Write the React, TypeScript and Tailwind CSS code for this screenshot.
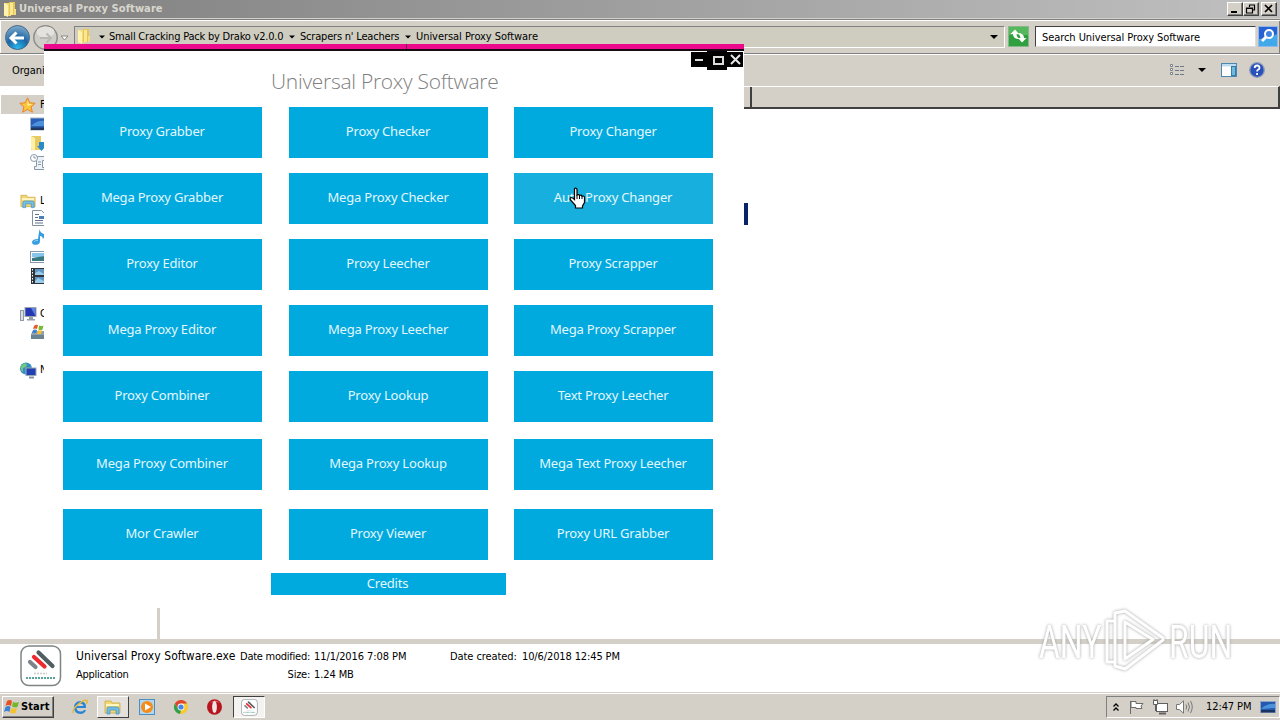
import type { ReactNode } from 'react';

const rows: { h: string; items: string[] }[] = [
  { h: 'mt-[12px]', items: ['Proxy Grabber', 'Proxy Checker', 'Proxy Changer'] },
  { h: 'mt-[15px]', items: ['Mega Proxy Grabber', 'Mega Proxy Checker', 'Auto Proxy Changer'] },
  { h: 'mt-[15px]', items: ['Proxy Editor', 'Proxy Leecher', 'Proxy Scrapper'] },
  { h: 'mt-[15px]', items: ['Mega Proxy Editor', 'Mega Proxy Leecher', 'Mega Proxy Scrapper'] },
  { h: 'mt-[15px]', items: ['Proxy Combiner', 'Proxy Lookup', 'Text Proxy Leecher'] },
  { h: 'mt-[17px]', items: ['Mega Proxy Combiner', 'Mega Proxy Lookup', 'Mega Text Proxy Leecher'] },
  { h: 'mt-[19px]', items: ['Mor Crawler', 'Proxy Viewer', 'Proxy URL Grabber'] },
];

function FolderIcon({ className = '' }: { className?: string }) {
  return (
    <svg className={className} width="16" height="16" viewBox="0 0 16 16">
      <path d="M2 2h6l1 1v12H2z" fill="#f3dc7b" />
      <path d="M2 2l4 2v12l-4-2z" fill="#fff2ae" />
      <path d="M7 1h6v13H7z" fill="#e6c455" />
      <path d="M8 2h3v12H8z" fill="#f8e894" />
      <path d="M12 8h2v6h-2z" fill="#f5dd80" />
    </svg>
  );
}

function Caret({ className = '' }: { className?: string }) {
  return (
    <svg className={className} width="8" height="4" viewBox="0 0 8 4">
      <path d="M0 0h8L4 4z" fill="#000" />
    </svg>
  );
}

function LibraryIcon({ className = '' }: { className?: string }) {
  return (
    <svg className={className} width="18" height="16" viewBox="0 0 18 16">
      <path d="M1 2h6l1 2h8v10H1z" fill="#f1d873" stroke="#cfa942" strokeWidth=".8" />
      <path d="M2 5h13v2H2z" fill="#fff6c4" />
      <path d="M3 15V10q0-2 2-2h8q2 0 2 2v5h-3v-4H6v4z" fill="#74bfe8" stroke="#3c8dc4" strokeWidth=".7" />
    </svg>
  );
}

function AppLogo({ size }: { size: number }) {
  return (
    <svg width={size} height={size} viewBox="0 0 42 42">
      <rect x="1" y="1" width="39.500" height="39.500" rx="8" fill="#fff" stroke="#7d8585" strokeWidth="1.500" />
      <g strokeWidth="4.200" strokeLinecap="round">
        <path d="M18.500 7.500l14 13.500" stroke="#4f5f61" />
        <path d="M14 12l10.500 9.500" stroke="#ee2a2e" />
        <path d="M10 17l5.500 5" stroke="#7d8388" />
      </g>
      <path d="M14 28.500h13" stroke="#ccc" strokeWidth="1.500" strokeDasharray="2 1" />
      <path d="M6 33h29" stroke="#58a49a" strokeWidth="2" strokeDasharray="2 1" />
    </svg>
  );
}

function Win({ children }: { children: ReactNode }) {
  return (
    <span className="flex h-[14px] w-4 items-center justify-center border border-t-white border-l-white border-r-[#404040] border-b-[#404040] bg-[#d4d0c8] shadow-[inset_-1px_-1px_0_#808080]">
      <svg width="14" height="12" viewBox="0 0 14 12" fill="none" stroke="#000">{children}</svg>
    </span>
  );
}

function TitleBar() {
  return (
    <header className="flex h-[18px] items-center bg-linear-to-r from-[#808080] to-[#c0c0c0] pr-[3px] pl-[2px]">
      <FolderIcon />
      <span className="ml-px pt-px text-[11px] font-bold tracking-[0.090px] whitespace-nowrap text-[#d9d6ce]">Universal Proxy Software</span>
      <div className="ml-auto flex">
        <Win><path d="M3 9h6" strokeWidth="2" /></Win>
        <Win><path d="M5 2h6M5.500 2v2M10.500 2v5H9M2.500 5h6v5h-6zM2 5.500h7" strokeWidth="1.200" /></Win>
        <span className="w-[2px]" />
        <Win><path d="M3 2l7 7M10 2L3 9" strokeWidth="1.700" /></Win>
      </div>
    </header>
  );
}

function AddressBar() {
  return (
    <div className="flex h-[35px] items-start border-t border-b border-t-[#808080] border-b-[#808080] bg-[#d4d0c8] pt-[6px] pl-[4px] text-[11px] shadow-[inset_1px_1px_0_#fff,inset_-1px_0_0_#808080]">
      <svg className="-mt-[2px]" width="66" height="28" viewBox="0 0 66 28">
        <defs>
          <radialGradient id="nav" cx=".5" cy=".95" r=".9">
            <stop offset="0" stopColor="#27baf0" />
            <stop offset=".5" stopColor="#1c67a8" />
            <stop offset="1" stopColor="#79a5c6" />
          </radialGradient>
        </defs>
        <circle cx="13.500" cy="13.500" r="12" fill="url(#nav)" stroke="#466b89" />
        <path d="M7 14h13M12.500 8.500L7 14l5.500 5.500" fill="none" stroke="#fff" strokeWidth="3" />
        <circle cx="41.500" cy="13.500" r="11.700" fill="#cfcdc8" stroke="#8c8c88" strokeWidth="1.500" />
        <ellipse cx="41.500" cy="8" rx="9" ry="5.500" fill="#e4e2de" />
        <path d="M36 14h11M42.500 9.500L47 14l-4.500 4.500" fill="none" stroke="#bab8b3" strokeWidth="2" />
        <path d="M57 12h7l-3.500 4z" fill="#fff" stroke="#858585" />
      </svg>
      <div className="ml-[4px] flex h-[22px] w-[931px] items-center border border-t-[#808080] border-r-white border-b-white border-l-[#808080] bg-[#cfcdc0] whitespace-nowrap">
        <FolderIcon className="-mt-[2px] ml-[1px] shrink-0" />
        <Caret className="mr-[4px] ml-[7px] w-[6px] shrink-0" />
        <span className="w-[180px] tracking-[-0.210px]">Small Cracking Pack by Drako v2.0.0</span>
        <Caret className="mr-[5px] w-[6px] shrink-0" />
        <span className="w-[105px] tracking-[-0.200px]">Scrapers n&apos; Leachers</span>
        <Caret className="mr-[5px] w-[6px] shrink-0" />
        <span className="tracking-[-0.050px]">Universal Proxy Software</span>
        <Caret className="mr-[6px] ml-auto shrink-0" />
      </div>
      <svg className="ml-[3px]" width="21" height="21" viewBox="0 0 21 21">
        <rect x=".5" y=".5" width="20" height="20" fill="#2f9f3f" stroke="#87b889" />
        <path d="M1 1h19v8H1z" fill="#56b85c" />
        <path d="M2.500 8L7 3.500 11 8H8.500q0 3 3 5Q5 13 5 8zM18.500 12L14 16.500 10 12h2.500q0-3-3-5Q16 7 16 12z" fill="#fff" />
      </svg>
      <div className="ml-[6px] flex h-[21px] w-[221px] items-center border border-t-[#404040] border-r-[#ddd] border-b-[#ddd] border-l-[#404040] bg-white pt-[3px] pl-[6px] tracking-[-0.070px] whitespace-nowrap">
        Search Universal Proxy Software
      </div>
      <svg className="ml-[2px]" width="20" height="21" viewBox="0 0 20 21">
        <rect x=".5" y=".5" width="19" height="20" fill="#2861d2" stroke="#92b7ea" />
        <path d="M1 13q10 0 18-5v12H1z" fill="#41a8e9" />
        <circle cx="11" cy="8" r="4" fill="#3f83e1" stroke="#fff" strokeWidth="2" />
        <path d="M8 11l-4 4" stroke="#fff" strokeWidth="3" />
      </svg>
    </div>
  );
}

function CommandBar() {
  return (
    <div className="flex h-[32px] items-center border-t border-t-white bg-[#d4d0c8] pr-[15px] pl-[12px] text-[11px]">
      <span className="pt-px tracking-[-0.050px]">Organize</span>
      <svg className="-mt-[2px] ml-auto" width="16" height="12" viewBox="0 0 16 12" fill="none">
        <path d="M1.500 .5h2v2h-2zM1.500 4.500h2v2h-2zM1.500 8.500h2v2h-2z" fill="#fff" stroke="#7a8088" />
        <path d="M6 2.500h4M6 6.500h4M6 10.500h4M11 2.500h4M11 6.500h4M11 10.500h4" stroke="#6e7a88" />
      </svg>
      <Caret className="-mt-[2px] ml-[13px]" />
      <svg className="-mt-[2px] ml-[15px]" width="16" height="14" viewBox="0 0 16 14">
        <rect x=".5" y=".5" width="15" height="13" fill="#fff" stroke="#4c87ad" />
        <path d="M1 1h14v2.500H1z" fill="#bddcf0" />
        <rect x="10.500" y="3.500" width="4" height="9" fill="#71b9e1" stroke="#347ca8" />
      </svg>
      <svg className="-mt-[2px] ml-[12px]" width="16" height="16" viewBox="0 0 16 16">
        <circle cx="8" cy="8" r="7.300" fill="#2a50ba" stroke="#8d9dbb" strokeWidth="1.300" />
        <path d="M5.700 6q0-2.500 2.400-2.500T10.500 6Q10.500 7 9 7.800q-.9.500-.9 1.700M8.100 11v2" fill="none" stroke="#fff" strokeWidth="1.800" />
      </svg>
    </div>
  );
}

function NavTree() {
  return (
    <nav className="flex w-[157px] flex-col pt-[9px] text-[11px]">
      <div className="ml-px flex h-[19px] items-center bg-[#d4d0c8] pl-[18px]">
        <svg width="17" height="16" viewBox="0 0 17 16">
          <path d="M8.500 .8l2.300 5 5.400.5-4.100 3.600 1.300 5.300-4.900-2.800-4.900 2.800L4.900 9.900.8 6.300l5.400-.5z" fill="#fbc63c" stroke="#e9822b" />
          <path d="M8.500 3.500l1.500 3.500 3.500.3-5 1.700z" fill="#ffee99" />
        </svg>
        <span className="ml-[4px] pt-[2px]">Favorites</span>
      </div>
      <div className="flex flex-col gap-[3px] pt-[2px] pl-[30px]">
        <svg width="16" height="16" viewBox="0 0 16 16">
          <rect x=".5" y="2" width="15" height="12" fill="#2a5fb9" stroke="#a3b4c8" />
          <path d="M1 10Q7 4 15 5v5z" fill="#4d90db" />
          <path d="M1 11.500h14V14H1z" fill="#20385d" />
        </svg>
        <svg width="16" height="16" viewBox="0 0 16 16">
          <path d="M1 1h10v14H1z" fill="#e7ca62" />
          <path d="M1 1l4 2v13l-4-2z" fill="#fff0a7" />
          <path d="M9 7h5v4h2l-4.500 5L7 11h2z" fill="#2b8bc8" />
        </svg>
        <svg width="16" height="16" viewBox="0 0 16 16" fill="none" stroke="#8799a8">
          <path d="M5.500 2.500h9v4h-2v7h2v2h-10v-3h2v-6" fill="#eef2f5" />
          <circle cx="4" cy="4" r="3.500" fill="#fff" />
          <path d="M4 2v2h2M8 8h3M8 10.500h3" />
        </svg>
      </div>
      <div className="mt-[22px] flex h-[18px] items-center pl-[20px]">
        <LibraryIcon className="w-[17px]" />
        <span className="ml-[3px] pt-px">Libraries</span>
      </div>
      <div className="flex flex-col gap-[3px] pl-[30px]">
        <svg width="16" height="16" viewBox="0 0 16 16">
          <path d="M2.500 .5h9l3 3v12h-12z" fill="#fff" stroke="#8292a1" />
          <path d="M5 4.500h4M5 7.500h3M5 10.500h8M5 13h8" stroke="#61738c" />
          <path d="M9 6h5v3H9z" fill="#4c7ebc" />
        </svg>
        <svg width="16" height="16" viewBox="0 0 16 16">
          <path d="M9.500 0q.5 4 4.500 5 1.500 2-1 5-.5-3-3-3v5q0 3.500-4 3.800Q2 16 2 13q.5-3 6-3z" fill="#369de0" />
          <path d="M4 13q1-2 4-1.500" stroke="#8fd0f7" fill="none" />
        </svg>
        <svg className="mt-px" width="16" height="16" viewBox="0 0 16 16">
          <rect x=".5" y="2.500" width="15" height="11" fill="#fff" stroke="#8799a8" />
          <path d="M2 4h13v4H2z" fill="#87c5ed" />
          <path d="M2 9l6-1 7-1v5H2z" fill="#397a82" />
        </svg>
        <svg width="16" height="16" viewBox="0 0 16 16">
          <path d="M1 0h15v16H1z" fill="#30343a" />
          <path d="M2.500 1v14" stroke="#fff" strokeDasharray="1.500 1.500" />
          <path d="M5 1h9v6H5zM5 9h9v6H5z" fill="#6095c3" />
          <path d="M5 5l4-2 5 3v1H5zM5 13l3-3 6 3v2H5z" fill="#9acbe8" />
        </svg>
      </div>
      <div className="mt-[21px] flex h-[18px] items-center pl-[20px]">
        <svg width="18" height="16" viewBox="0 0 18 16">
          <rect x=".5" y="4.500" width="3" height="10" fill="#d9dfe4" stroke="#8e9aa6" />
          <rect x="5" y="1.500" width="11" height="9" fill="#2438b4" stroke="#9ba6b0" />
          <path d="M11 2h4.500v8z" fill="#6281df" />
          <path d="M9 11h4v2h2v1.500H7V13h2z" fill="#95a0aa" />
        </svg>
        <span className="ml-[2px] pt-px">Computer</span>
      </div>
      <svg className="ml-[30px]" width="16" height="18" viewBox="0 0 16 18">
        <path d="M1 11l2-3h11l2 3v5H1z" fill="#91a1ab" />
        <path d="M1 12h15v4H1z" fill="#698390" />
        <path d="M4 3q2-2 4-1L7 6q-2-1-4 0z" fill="#e35b29" />
        <path d="M9 2.500q2 1 4.500 0l-1 4q-2 1-4 0z" fill="#77ba34" />
        <path d="M3 7q2-1 4 0l-1 3H2z" fill="#3d81d0" />
        <path d="M8 7q2 1 4 0l-1 4H7z" fill="#f5bf30" />
      </svg>
      <div className="mt-[20px] flex h-[18px] items-center pl-[19px]">
        <svg width="18" height="17" viewBox="0 0 18 17">
          <circle cx="7" cy="6.500" r="6" fill="#328ec4" />
          <path d="M2 4q3-4 6-2l-1 3-3 1v4Q1 8 2 4z" fill="#75c879" />
          <rect x="7" y="6" width="10" height="7.500" fill="#2140b2" stroke="#9ca9b5" />
          <path d="M10 15.500h5" stroke="#8592a0" strokeWidth="2" />
        </svg>
        <span className="ml-[3px] pt-px">Network</span>
      </div>
    </nav>
  );
}

function DetailsPane() {
  return (
    <div className="flex h-[48px] bg-white pl-[20px] text-[11px] whitespace-nowrap">
      <div className="pt-[1px]"><AppLogo size={42} /></div>
      <div className="ml-[14px] flex w-[164px] flex-col pt-[4px]">
        <span className="h-[18px] text-[12px] leading-[16px] tracking-[0.090px]">Universal Proxy Software.exe</span>
        <span className="h-[18px] leading-[18px] tracking-[-0.250px]">Application</span>
      </div>
      <div className="flex w-[70px] flex-col items-end pt-[4px] leading-[18px]">
        <span className="tracking-[-0.250px]">Date modified:</span>
        <span className="tracking-[-0.250px]">Size:</span>
      </div>
      <div className="ml-[4px] flex w-[136px] flex-col pt-[4px] leading-[18px]">
        <span className="tracking-[-0.080px]">11/1/2016 7:08 PM</span>
        <span className="tracking-[-0.100px]">1.24 MB</span>
      </div>
      <span className="w-[72px] pt-[4px] leading-[18px] tracking-[-0.080px]">Date created:</span>
      <span className="pt-[4px] leading-[18px] tracking-[-0.120px]">10/6/2018 12:45 PM</span>
    </div>
  );
}

function Taskbar() {
  return (
    <footer className="flex h-[28px] items-start border-t border-t-[#d4d0c8] bg-[#d4d0c8] pt-[3px] pl-[2px] shadow-[inset_0_1px_0_#fff]">
      <div className="flex h-[22px] w-[52px] items-center border border-t-white border-r-[#404040] border-b-[#404040] border-l-white pl-[1px] shadow-[inset_-1px_-1px_0_#808080]">
        <svg className="shrink-0" width="16" height="16" viewBox="0 0 16 16">
          <path d="M3 2q3-2 5 0L7 7Q4 5 1.500 7z" fill="#e55324" />
          <path d="M9 3q3 1.500 6 0l-1.500 5Q11 9 8 7.500z" fill="#74b72b" />
          <path d="M1.500 8q3-2 5 0l-1 5Q3 11 0 13z" fill="#3b82d2" />
          <path d="M7.500 9q3 1.500 5.500 0l-1.500 5Q9 15 6 13.500z" fill="#f6c12b" />
        </svg>
        <span className="ml-px pt-px text-[11px] font-bold tracking-[0.100px]">Start</span>
      </div>
      <svg className="mt-[3px] ml-[18px]" width="16" height="16" viewBox="0 0 16 16" fill="none">
        <path d="M14 9H4.500q.5 3.500 4 3.500 2.500 0 3.500-1.500h2Q12.500 15 8.500 15 2 14.500 2 8.500T8.500 2Q14.500 2.500 14 9zM4.500 7h7Q11 4.500 8 4.500T4.500 7z" fill="#2a84d5" fillRule="evenodd" />
        <path d="M1.500 14Q-.5 11 6 5.500T15 1.500q1 1-.8 3.500" stroke="#e6b93c" strokeWidth="1.500" />
      </svg>
      <div className="ml-[9px] flex h-[22px] w-[32px] items-center justify-center border border-t-white border-r-[#404040] border-b-[#404040] border-l-white bg-[#e4e1dc]">
        <LibraryIcon />
      </div>
      <svg className="mt-[3px] ml-[10px]" width="16" height="16" viewBox="0 0 16 16">
        <rect x=".5" y=".5" width="15" height="15" fill="#b3d6ee" stroke="#498fc5" />
        <circle cx="8" cy="8" r="6" fill="#f58b18" />
        <path d="M6 4.500l6 3.500-6 3.500z" fill="#fff" />
      </svg>
      <svg className="mt-[3px] ml-[18px]" width="16" height="16" viewBox="0 0 16 16">
        <circle cx="8" cy="8" r="7" fill="#f9c92f" />
        <path d="M1.900 4.500A7 7 0 0 1 14.100 4.500H8L5 9.700z" fill="#df4434" />
        <path d="M1.900 4.500L5 9.800 8 11.500 7 15A7 7 0 0 1 1.900 4.500z" fill="#2fa04f" />
        <circle cx="8" cy="8" r="3.400" fill="#fff" />
        <circle cx="8" cy="8" r="2.600" fill="#4585e8" />
      </svg>
      <svg className="mt-[3px] ml-[18px]" width="16" height="16" viewBox="0 0 16 16">
        <ellipse cx="7.500" cy="8" rx="7.500" ry="7.700" fill="#b71620" />
        <path d="M3 4q5-5 10 0-5-2-10 0z" fill="#e8646a" />
        <ellipse cx="7.500" cy="8" rx="2.400" ry="6" fill="#f0e6e3" />
      </svg>
      <div className="ml-[10px] flex h-[22px] w-[32px] items-center justify-center border border-t-[#404040] border-r-white border-b-white border-l-[#404040] bg-[#f4f3f1]">
        <AppLogo size={17} />
      </div>
      <div className="ml-auto flex h-[22px] w-[174px] items-center border border-t-[#808080] border-r-white border-b-white border-l-[#808080]">
        <svg className="ml-[6px]" width="6" height="9" viewBox="0 0 6 9" fill="none" stroke="#000" strokeWidth="1.300">
          <path d="M.5 3.500L3 1l2.500 2.500M.5 7.500L3 5l2.500 2.500" />
        </svg>
        <svg className="ml-[9px]" width="16" height="16" viewBox="0 0 16 16" fill="#fff" stroke="#6b6b6b">
          <path d="M2.500 15V2M3 2.500h5v2h7l-2 2.500 1 2.500H8v-1H3z" />
        </svg>
        <svg className="ml-[8px]" width="16" height="16" viewBox="0 0 16 16" fill="#fff" stroke="#606060">
          <rect x="4.500" y="4.500" width="11" height="8" />
          <path d="M7 14.500h7" strokeWidth="2" />
          <path d="M1.500 1.500h4v4h-4zM3.500 6v6M2 0v2M5 0v2" />
        </svg>
        <svg className="ml-[8px]" width="17" height="14" viewBox="0 0 17 14" fill="none" stroke="#777">
          <path d="M.5 4.500h3L7.500.8v12.400L3.500 9.500h-3z" fill="#fff" />
          <path d="M10 4.500q1.500 2.500 0 5M12 2.500q3 4.500 0 9M14.500 1q3.500 6 0 12" />
        </svg>
        <span className="ml-[13px] w-[46px] pt-px text-[11px] tracking-[-0.100px] whitespace-nowrap">12:47 PM</span>
        <svg className="ml-[8px]" width="16" height="13" viewBox="0 0 16 13">
          <rect x=".5" y=".5" width="15" height="11" fill="#2457ae" stroke="#8ba4c5" />
          <path d="M1 8q6-6 14-5v4z" fill="#4b92dc" />
          <path d="M1 9h14v2.500H1z" fill="#1b3461" />
        </svg>
      </div>
    </footer>
  );
}

function Watermark() {
  return (
    <div className="absolute top-[606px] left-[1039px] flex h-[70px] w-[204px] items-center font-['Roboto','Liberation_Sans',sans-serif] text-[47px] leading-[70px] font-normal text-white drop-shadow-[0_0_1.500px_#a0a0a0]">
      <span className="mt-px w-[64px]"><span className="inline-block origin-left scale-x-[0.680]">ANY</span></span>
      <svg width="64" height="70" viewBox="0 0 64 70" fill="none" stroke="#fff" strokeWidth="3" strokeLinejoin="round">
        <path d="M12 15H4v41h8M12 56V7l10-2 38 27v2L22 63l-10-3V52M22 16v37l28-19.500z" />
      </svg>
      <span className="mt-px ml-[2px] w-[64px]"><span className="inline-block origin-left scale-x-[0.680]">RUN</span></span>
    </div>
  );
}

function ProxyWindow() {
  return (
    <section className="absolute top-[44px] left-[44px] flex h-[564px] w-[700px] flex-col bg-white font-['Noto_Sans','Open_Sans',sans-serif]">
      <div className="flex h-[7px] border-b-2 border-b-[#190b15] bg-[#ec098c]">
        <span className="ml-[362px] w-px bg-[#7c1050]" />
      </div>
      <div className="flex h-[19px] items-start justify-end">
        <div className="mt-px flex h-[15px] w-[16px] items-center bg-black pl-[4px]"><span className="h-[2px] w-2 bg-[#ddd]" /></div>
        <div className="flex h-[19px] w-[20px] justify-center bg-black pt-[5px] pl-[2px]"><span className="h-[9px] w-[11px] border-2 border-[#ddd]" /></div>
        <div className="mt-px mr-px flex h-[15px] w-[16px] items-center justify-center bg-black">
          <svg width="11" height="11" viewBox="0 0 11 11"><path d="M1 1l9 9M10 1l-9 9" stroke="#e8e8e8" strokeWidth="2" /></svg>
        </div>
      </div>
      <h1 className="-mt-[3px] ml-[227px] h-[28px] font-['Open_Sans','Noto_Sans',sans-serif] text-[21px] leading-[28px] font-light tracking-[-0.280px] whitespace-nowrap text-[#7f7f7f]">Universal Proxy Software</h1>
      {rows.map((row) => (
        <div key={row.items[0]} className={`${row.h} ml-[19px] grid h-[51px] shrink-0 grid-cols-[200px_199px_199px] gap-x-[26px] first-of-type:mt-0`}>
          {row.items.map((item) => (
            <button key={item} className={`flex w-[199px] items-center justify-center pr-px pb-[2px] text-[13px] tracking-[-0.200px] whitespace-nowrap text-[#e4f6fc] ${item === 'Auto Proxy Changer' ? 'bg-[#17b0de]' : 'bg-[#00aadf]'}`}>
              {item}
            </button>
          ))}
        </div>
      ))}
      <button className="mt-[13px] ml-[227px] flex h-[22px] w-[235px] items-center justify-center bg-[#00aadf] pr-[2px] pb-px text-[13px] tracking-[-0.200px] text-[#e4f6fc]">Credits</button>
    </section>
  );
}

export default function App() {
  return (
    <main className="relative flex h-[720px] w-[1280px] flex-col overflow-hidden bg-white font-['DejaVu_Sans_Condensed','Noto_Sans',sans-serif] text-black">
      <TitleBar />
      <div className="h-px shrink-0 bg-[#d4d0c8]" />
      <AddressBar />
      <CommandBar />
      <div className="flex min-h-0 flex-1">
        <NavTree />
        <div className="w-[3px] bg-[#d4d0c8]" />
        <div className="flex flex-1 flex-col">
          <div className="flex h-[23px] border-t border-r-2 border-b-2 border-t-white border-r-[#404040] border-b-[#404040] bg-[#d4d0c8]">
            <span className="ml-[590px] w-[2px] bg-[#404040]" />
          </div>
        </div>
      </div>
      <div className="h-[5px] shrink-0 bg-[#d4d0c8]" />
      <DetailsPane />
      <Taskbar />
      <span className="absolute top-[203px] left-[744px] h-[22px] w-[4px] bg-[#0a246a]" />
      <Watermark />
      <ProxyWindow />
      <svg className="absolute top-[187px] left-[569px]" width="18" height="22" viewBox="0 0 18 22">
        <path d="M5.500 1.500q2-1 2.500 1V8q2-1 2.500.5 2-1 2.500.7 2.500-.7 2.500 1.300v5l-2 3.500V21H6.500v-2.500L1.500 13q-1-2 .5-2.500 1.500 0 3.500 2z" fill="#fff" stroke="#000" strokeWidth="1.200" />
        <path d="M8 8v4M10.500 8.500V12M13 9v3" stroke="#000" />
      </svg>
    </main>
  );
}
